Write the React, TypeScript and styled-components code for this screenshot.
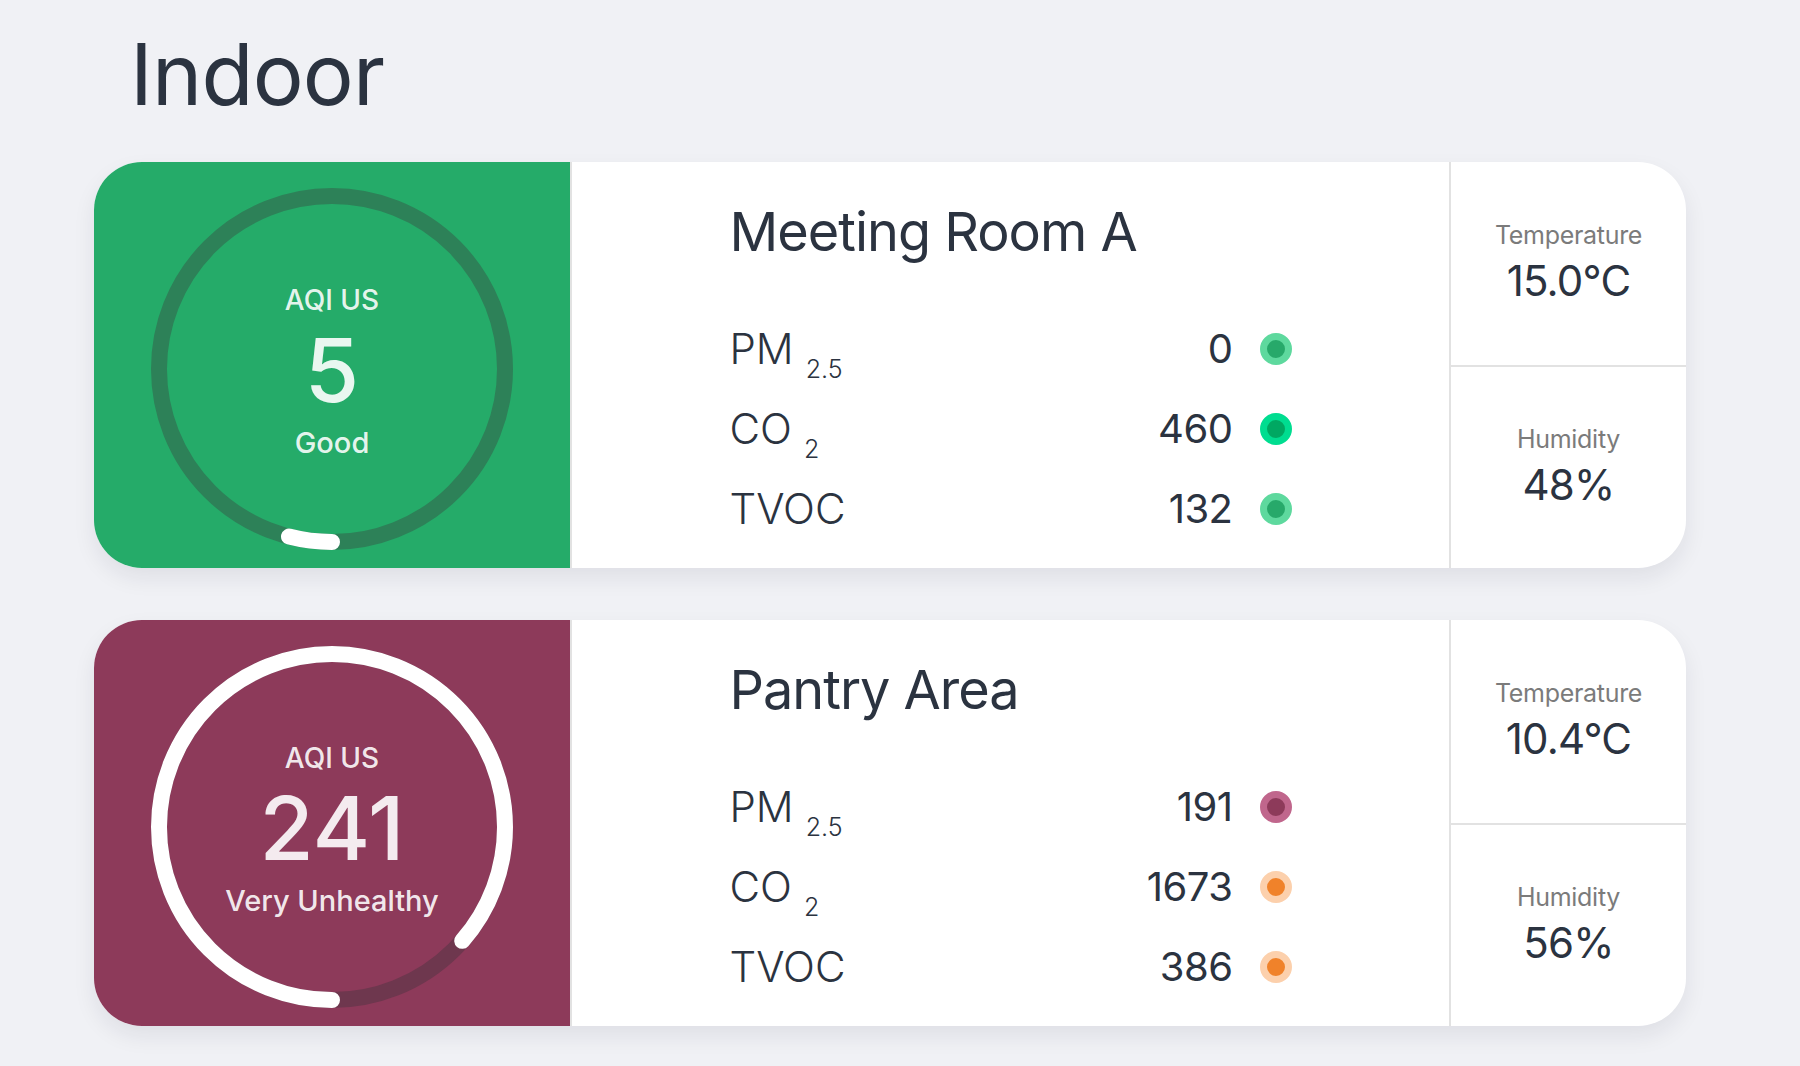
import React from "react";
import styled, { createGlobalStyle } from "styled-components";

const GlobalStyle = createGlobalStyle`
  html, body {
    margin: 0;
    padding: 0;
    background: #f0f1f5;
    font-family: Inter, "Noto Sans", "Liberation Sans", sans-serif;
    color: #2b3340;
  }
`;

type Tone = { ring: string; core: string };

const tones: Record<string, Tone> = {
  good: { ring: "#5ed99e", core: "#27a96a" },
  fresh: { ring: "#00dd90", core: "#00a862" },
  purple: { ring: "#c0668c", core: "#8d3a5a" },
  orange: { ring: "#fcd0ac", core: "#f0822a" },
};

type Metric = { label: string; sub?: string; value: string; tone: Tone };

type Room = {
  name: string;
  aqi: number;
  status: string;
  color: string;
  track: string;
  progress: number;
  metrics: Metric[];
  temperature: string;
  humidity: string;
};

const rooms: Room[] = [
  {
    name: "Meeting Room A",
    aqi: 5,
    status: "Good",
    color: "#25ab69",
    track: "#2d8158",
    progress: 0.04,
    metrics: [
      { label: "PM", sub: "2.5", value: "0", tone: tones.good },
      { label: "CO", sub: "2", value: "460", tone: tones.fresh },
      { label: "TVOC", value: "132", tone: tones.good },
    ],
    temperature: "15.0°C",
    humidity: "48%",
  },
  {
    name: "Pantry Area",
    aqi: 241,
    status: "Very Unhealthy",
    color: "#8d3a5a",
    track: "#6e374e",
    progress: 0.864,
    metrics: [
      { label: "PM", sub: "2.5", value: "191", tone: tones.purple },
      { label: "CO", sub: "2", value: "1673", tone: tones.orange },
      { label: "TVOC", value: "386", tone: tones.orange },
    ],
    temperature: "10.4°C",
    humidity: "56%",
  },
];

const GAUGE = 362;
const RADIUS = 173;
const CIRC = 2 * Math.PI * RADIUS;

// ring starts at 6 o'clock and fills clockwise
function Gauge({ room }: { room: Room }) {
  const c = GAUGE / 2;
  return (
    <GaugeSvg width={GAUGE} height={GAUGE} viewBox={`0 0 ${GAUGE} ${GAUGE}`}>
      <circle cx={c} cy={c} r={RADIUS} fill="none" stroke={room.track} strokeWidth={16} />
      <circle
        cx={c}
        cy={c}
        r={RADIUS}
        fill="none"
        stroke="#ffffff"
        strokeWidth={16}
        strokeLinecap="round"
        strokeDasharray={`${room.progress * CIRC} ${CIRC}`}
        transform={`rotate(90 ${c} ${c})`}
      />
    </GaugeSvg>
  );
}

export default function App() {
  return (
    <>
      <GlobalStyle />
      <Page>
        <Heading>Indoor</Heading>
        <CardList>
          {rooms.map((room) => (
            <Card key={room.name}>
              <AqiPanel $bg={room.color}>
                <Gauge room={room} />
                <AqiText>
                  <AqiLabel>AQI US</AqiLabel>
                  <AqiValue>{room.aqi}</AqiValue>
                  <AqiStatus>{room.status}</AqiStatus>
                </AqiText>
              </AqiPanel>
              <Details>
                <DetailsInner>
                  <RoomName>{room.name}</RoomName>
                  {room.metrics.map((m) => (
                    <MetricRow key={m.label}>
                      <MetricLabel>
                        {m.label}
                        {m.sub && <Sub>{m.sub}</Sub>}
                      </MetricLabel>
                      <MetricValue>{m.value}</MetricValue>
                      <Dot $tone={m.tone} />
                    </MetricRow>
                  ))}
                </DetailsInner>
              </Details>
              <Climate>
                <ClimateCell>
                  <ClimateLabel>Temperature</ClimateLabel>
                  <ClimateValue>{room.temperature}</ClimateValue>
                </ClimateCell>
                <ClimateCell $divided>
                  <ClimateLabel>Humidity</ClimateLabel>
                  <ClimateValue>{room.humidity}</ClimateValue>
                </ClimateCell>
              </Climate>
            </Card>
          ))}
        </CardList>
      </Page>
    </>
  );
}

const Page = styled.div`
  padding: 24px 0 40px 94px;
`;

const Heading = styled.h1`
  margin: 0 0 36px;
  padding-left: 36px;
  font-size: 85px;
  line-height: 1.2;
  font-weight: 400;
  letter-spacing: -0.8px;
  color: #2b3340;
`;

const CardList = styled.div`
  display: flex;
  flex-direction: column;
  gap: 52px;
`;

const Card = styled.div`
  width: 1592px;
  height: 406px;
  display: grid;
  grid-template-columns: 476px 1fr 237px;
  background: #ffffff;
  border-radius: 48px;
  overflow: hidden;
  box-shadow: 0 10px 22px rgba(20, 30, 50, 0.08);
`;

const AqiPanel = styled.div<{ $bg: string }>`
  display: grid;
  place-items: center;
  background: ${(p) => p.$bg};

  & > * {
    grid-area: 1 / 1;
  }
`;

const GaugeSvg = styled.svg`
  margin-top: 8px;
`;

const AqiText = styled.div`
  display: flex;
  flex-direction: column;
  align-items: center;
  padding-top: 15px;
  color: rgba(255, 255, 255, 0.9);
`;

const AqiLabel = styled.div`
  font-size: 28px;
  line-height: 1.2;
  font-weight: 500;
`;

const AqiValue = styled.div`
  margin-top: 9px;
  font-size: 88px;
  line-height: 1;
  font-weight: 500;
`;

const AqiStatus = styled.div`
  margin-top: 12px;
  font-size: 29px;
  line-height: 1.2;
  font-weight: 500;
`;

const Details = styled.div`
  display: flex;
  justify-content: center;
  border-left: 2px solid #e2e2e2;
  padding-top: 38px;
`;

const DetailsInner = styled.div`
  width: 562px;
  display: flex;
  flex-direction: column;
`;

const RoomName = styled.h2`
  margin: 0 0 44px;
  font-size: 54px;
  line-height: 1.2;
  font-weight: 400;
  letter-spacing: -1px;
  color: #2b3340;
`;

const MetricRow = styled.div`
  height: 80px;
  display: flex;
  align-items: center;
`;

const MetricLabel = styled.div`
  flex: 1;
  font-size: 42px;
  line-height: 1;
  font-weight: 300;
  color: #2b3340;
`;

const Sub = styled.span`
  margin-left: 12px;
  font-size: 25px;
  line-height: 0;
  vertical-align: -14px;
`;

const MetricValue = styled.div`
  font-size: 40px;
  line-height: 1;
  font-weight: 400;
  letter-spacing: -0.5px;
  text-align: right;
  color: #2b3340;
`;

const Dot = styled.span<{ $tone: Tone }>`
  box-sizing: border-box;
  width: 32px;
  height: 32px;
  margin-left: 27px;
  border-radius: 50%;
  background: ${(p) => p.$tone.core};
  border: 7px solid ${(p) => p.$tone.ring};
`;

const Climate = styled.div`
  display: grid;
  grid-template-rows: 1fr 1fr;
  border-left: 2px solid #e2e2e2;
`;

const ClimateCell = styled.div<{ $divided?: boolean }>`
  display: flex;
  flex-direction: column;
  align-items: center;
  justify-content: center;
  border-top: ${(p) => (p.$divided ? "2px solid #e2e2e2" : "none")};
`;

const ClimateLabel = styled.div`
  font-size: 25px;
  line-height: 1.2;
  letter-spacing: -0.3px;
  color: #7b7b7b;
`;

const ClimateValue = styled.div`
  margin-top: 6px;
  font-size: 42px;
  line-height: 1.2;
  letter-spacing: -0.8px;
  color: #2b3340;
`;
